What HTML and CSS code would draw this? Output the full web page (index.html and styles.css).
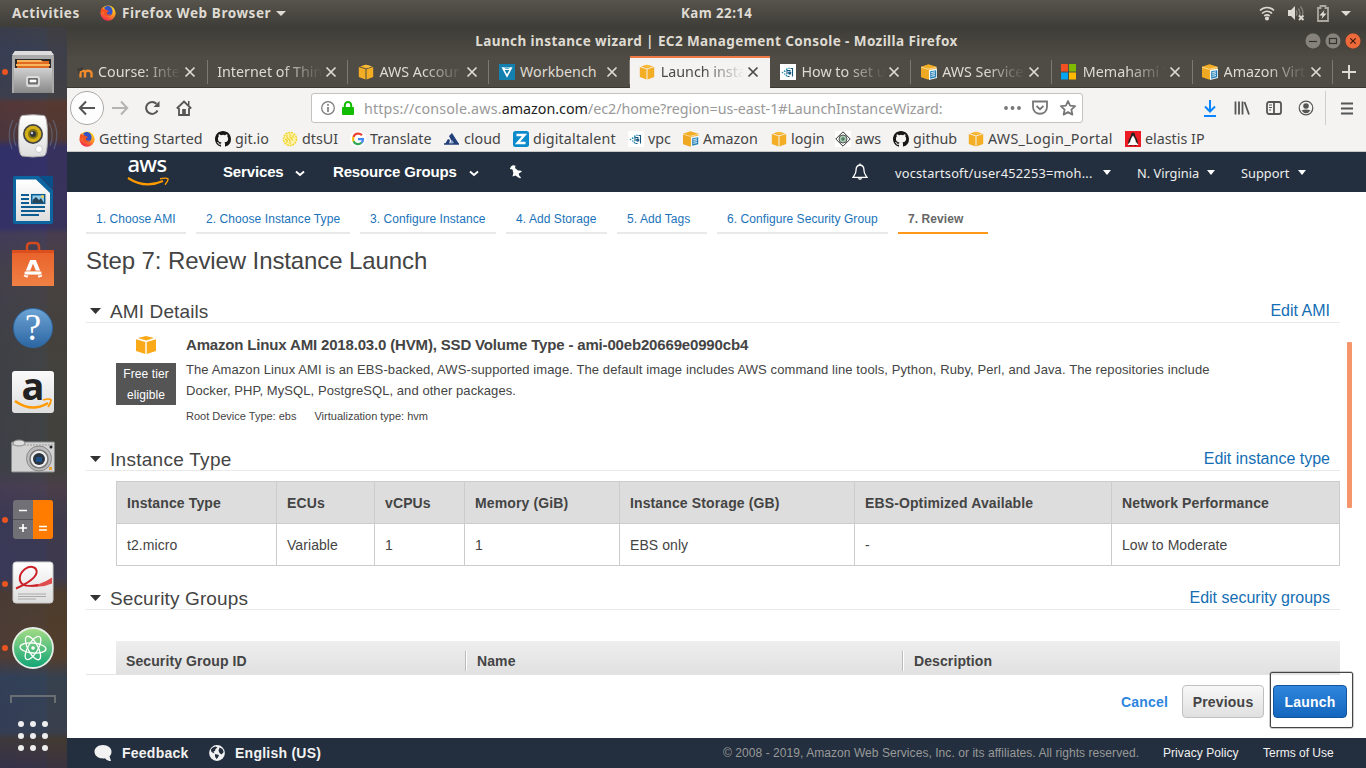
FILE: index.html
```html
<!DOCTYPE html>
<html lang="en">
<head>
<meta charset="utf-8">
<title>Launch instance wizard | EC2 Management Console</title>
<link rel="stylesheet" href="styles.css">
</head>
<body>
<svg class="defs" width="0" height="0">
  <defs>
    <linearGradient id="fxg" x1="0.8" y1="0" x2="0.3" y2="1"><stop offset="0" stop-color="#ffe226"/><stop offset="0.45" stop-color="#ff9a1f"/><stop offset="1" stop-color="#f0214d"/></linearGradient>
    <linearGradient id="metal" x1="0" y1="0" x2="0" y2="1"><stop offset="0" stop-color="#d0d0d0"/><stop offset="1" stop-color="#888"/></linearGradient>
    <linearGradient id="paper" x1="0" y1="0" x2="0" y2="1"><stop offset="0" stop-color="#fff"/><stop offset="1" stop-color="#ddd"/></linearGradient>
    <linearGradient id="bagg" x1="0" y1="0" x2="0" y2="1"><stop offset="0" stop-color="#e8612a"/><stop offset="1" stop-color="#f08044"/></linearGradient>
    <linearGradient id="atomg" x1="0" y1="0" x2="0" y2="1"><stop offset="0" stop-color="#a5dc85"/><stop offset="1" stop-color="#0fa576"/></linearGradient>
    <symbol id="firefox" viewBox="0 0 16 16"><circle cx="8" cy="8.2" r="7.6" fill="url(#fxg)"/><path d="M4.200 2.800C6 .5 9.700.5 11.600 3c1.200 1.600 1.300 4.500.3 6-1.300 2-4.300 2.500-5.900 1C5 8.500 5.300 6.800 6.800 6.200 5.700 5.300 4.800 4.300 4.200 2.800z" fill="#3453c9"/><path d="M.7 6.500C1 4.200 1.700 3 2.300 2.100c.1.8.4 1.400.9 1.900 1.500-.3 2.800.5 3.600 1.300 1 .2 2 .3 1.900.9-.3.900-1.700.8-2 1.700.5 2 2.600 2 3.800 1.200-.5 2.500-4.500 2.800-6 .6C3.400 8.500 3.500 7.500 3.800 6.700 2.500 7 2 8 2 9.300z" fill="#f5531f"/></symbol>
    <symbol id="cube" viewBox="0 0 16 16"><path d="M8 .8 14 2.600 8 4.400 2 2.600zM.8 3l6.700 2.200V15.600L.8 13.100zM15.200 3l-6.700 2.200V15.600l6.700-2.500z" fill="#f3ae25"/><path d="M4 2 8 .8l6 1.800L10 3.700z" fill="#f8bd3d"/></symbol>
    <symbol id="cubedoc" viewBox="0 0 16 16"><path d="M0 2.800 7.500.3 15.500 2.800v10L7.500 15.500 0 13z" fill="#f3ae25"/><path d="M0 3.500 7 5.700V15.500L0 13z" fill="#eea822"/><path d="M0 3.200L7 5.300l8.500-2" fill="none" stroke="#fbe3b0" stroke-width=".8"/><path d="M8 6l8-1.500v9.500L8 16z" fill="#f2f8fb"/><path d="M9.200 7.200l6-1v7l-6 1.500z" fill="#2481b7"/><path d="M10.300 8.500l3.700-.6M10.300 10.300l3.700-.6M10.300 12.300l3.700-.7" stroke="#fff" stroke-width=".9"/></symbol>
    <symbol id="github" viewBox="0 0 16 16"><path fill="#181717" fill-rule="evenodd" d="M8 0C3.580 0 0 3.580 0 8c0 3.540 2.290 6.530 5.470 7.590.4.070.55-.17.55-.38 0-.19-.01-.82-.01-1.490-2.010.37-2.530-.49-2.690-.94-.09-.23-.48-.94-.82-1.130-.28-.15-.68-.52-.01-.53.63-.01 1.080.58 1.230.82.72 1.210 1.870.87 2.330.66.070-.52.280-.87.510-1.070-1.780-.2-3.640-.89-3.640-3.950 0-.87.310-1.590.820-2.150-.08-.2-.36-1.020.080-2.120 0 0 .67-.21 2.200.82a7.600 7.600 0 0 1 4 0c1.530-1.040 2.200-.82 2.200-.82.44 1.100.16 1.920.08 2.120.51.56.82 1.270.82 2.150 0 3.070-1.870 3.750-3.650 3.950.29.25.54.73.54 1.480 0 1.070-.01 1.930-.01 2.200 0 .21.15.46.55.38A8 8 0 0 0 16 8c0-4.420-3.580-8-8-8z"/></symbol>
    <symbol id="dots" viewBox="0 0 16 16"><rect width="16" height="16" fill="#fff"/><g fill="#2e8fb5"><circle cx="2.500" cy="8.500" r=".8"/><circle cx="4.700" cy="7.200" r=".9"/><circle cx="4.800" cy="10" r=".8"/><circle cx="6.800" cy="5.200" r=".9"/><circle cx="9" cy="4.200" r=".8"/><circle cx="6.500" cy="11.500" r=".9"/></g><g fill="none" stroke="#16577d" stroke-width="1.100"><path d="M7 10V6.500H10.500M10.500 4.500H12.500V12.500M7.500 12.500h2"/></g><circle cx="9.700" cy="9" r="1.700" fill="#1d5f88"/></symbol>
    <symbol id="close" viewBox="0 0 12 12"><path d="M1.500 1.500l9 9m0-9l-9 9" stroke="currentColor" stroke-width="1.700"/></symbol>
    <symbol id="chev" viewBox="0 0 10 7"><path d="M1 1.500l4 3.500 4-3.500" stroke="currentColor" fill="none" stroke-width="2"/></symbol>
    <symbol id="tri" viewBox="0 0 10 6" preserveAspectRatio="none"><path d="M0 0h10L5 6z" fill="currentColor"/></symbol>
  </defs>
</svg>
<div class="desktop">
  <header class="topbar">
    <span class="tb-act">Activities</span>
    <svg class="i16 tb-ff"><use href="#firefox"/></svg>
    <span class="tb-app">Firefox Web Browser</span>
    <svg class="tb-tri" width="10" height="5"><use href="#tri"/></svg>
    <span class="tb-clock">Kam 22:14</span>
    <div class="tb-status">
      <svg width="16" height="16" viewBox="0 0 16 16" fill="none" stroke="#dcdad2" stroke-width="1.700"><path d="M1 5.500c4-4 10-4 14 0M3 8.500c3-3 7-3 10 0M5.300 11c1.800-1.500 3.600-1.500 5.400 0"/><circle cx="8" cy="13.500" r="1.200" fill="#dcdad2"/></svg>
      <svg width="18" height="16" viewBox="0 0 18 16"><path d="M1 5h3l4-4v14l-4-4H1z" fill="#dcdad2"/><path d="M9 5.500q2 2.500 0 5M11.300 3.500q3 4 .5 8M13.500 1.500q4 5 1.500 9" fill="none" stroke="#84827a" stroke-width="1.300"/><path d="M12 10.500l4.500 4.500m0-4.500L12 15" stroke="#dcdad2" stroke-width="1.800"/></svg>
      <svg width="12" height="17" viewBox="0 0 12 17"><path d="M1 3h2.500V1h5v2H11v13H1z" fill="none" stroke="#aaa89f" stroke-width="1.800"/><path d="M7.500 5L2.500 10.500H5.500L4.500 14 9.500 8.500H6.500z" fill="#e3e1d8"/></svg>
      <svg width="10" height="5"><use href="#tri"/></svg>
    </div>
  </header>
  <div class="below">
    <aside class="dock">
      <div class="app on"><svg width="42" height="44" viewBox="0 0 42 44"><path d="M3 1h36l3 5v37H0V6z" fill="#aaa"/><path d="M3 1h36l3 4H0z" fill="#ddd"/><path d="M3 9h36v11H3z" fill="#2a2a2a"/><path d="M5 11h32v8H5z" fill="#e06a22"/><path d="M5 10h24l2 2H5zM4 14h34v2H4z" fill="#f7b55c"/><path d="M2 18h38v25H2z" fill="url(#metal)"/><rect x="15" y="27" width="12" height="9" rx="1.500" fill="#aaa" stroke="#ddd" stroke-width="1.800"/><rect x="17" y="29" width="8" height="4" fill="#fff" stroke="#333"/></svg></div>
      <div class="app"><svg width="50" height="44" viewBox="0 0 50 44"><path d="M9 9Q3 20 8 32M5 6Q-2 20 4 35M41 9Q47 20 42 32M45 6Q52 20 46 35" fill="none" stroke="#7286a8" stroke-opacity=".45" stroke-width="1.300"/><path d="M14 1.500q11-1.500 22 0 3.500 1 3.500 20.500T36 42q-11 2-22 0-3.500-1-3.500-20T14 1.500z" fill="url(#paper)" stroke="#aaa"/><circle cx="25" cy="20" r="10" fill="#444"/><circle cx="25" cy="20" r="8.300" fill="#d4b116"/><circle cx="25" cy="20" r="5" fill="#8a7410"/><circle cx="25" cy="20" r="3" fill="#30343c"/><circle cx="24" cy="19" r="1.200" fill="#ccd"/><circle cx="31" cy="35" r="3.500" fill="#fff" stroke="#ccc"/></svg></div>
      <div class="app"><svg width="40" height="48" viewBox="0 0 40 48"><path d="M2 0h24l14 14v32q0 2-2 2H2q-2 0-2-2V2q0-2 2-2z" fill="#0c659f"/><path d="M27 0h12q1 0 1 1v12z" fill="#07508a"/><path d="M3 3.500h20L37 17v28H3z" fill="url(#paper)"/><path d="M8 19h8M8 23h8M8 27h8M8 31h24M8 35h24M8 39h18" stroke="#0c5d92" stroke-width="2"/><rect x="18.700" y="18.700" width="13" height="8.600" fill="#93cdec" stroke="#0c5d92" stroke-width="1.500"/><path d="M19.500 27v-3l3.500-3 3 3 2-2 3 5z" fill="#28465a"/><circle cx="29.500" cy="20.500" r="1.500" fill="#edd14c"/></svg></div>
      <div class="app"><svg width="42" height="46" viewBox="0 0 42 46"><path d="M15 12V6q0-4 4-4h4q4 0 4 4v6" fill="none" stroke="#d14b1e" stroke-width="2.500"/><path d="M0 9h42v36H0z" fill="url(#bagg)"/><path d="M0 9h42v3H0z" fill="#db4e1d"/><path d="M13.500 36l6-15h3l6 15" fill="none" stroke="#fff" stroke-width="4"/><rect x="12" y="30" width="18" height="4" rx="2" fill="#fff" stroke="#e97238" stroke-width=".8"/></svg></div>
      <div class="app"><div class="help">?</div></div>
      <div class="app"><div class="amz"><span>a</span><svg width="38" height="12" viewBox="0 0 38 12"><path d="M1 3q17 12 33 2" fill="none" stroke="#ff9900" stroke-width="2.600"/><path d="M29 2q7-2 8 0 0 3-3 7" fill="none" stroke="#ff9900" stroke-width="1.800"/></svg></div></div>
      <div class="app"><svg width="44" height="34" viewBox="0 0 44 34"><rect x=".5" y="3" width="43" height="30" rx="1" fill="#d2d2d2" stroke="#888"/><path d="M1 6h42" stroke="#999" stroke-dasharray="2 1"/><ellipse cx="8" cy="4" rx="6" ry="3" fill="#ddd" stroke="#888"/><circle cx="28" cy="19.500" r="12.500" fill="#bbb" stroke="#888"/><circle cx="28" cy="20" r="9" fill="#eee" stroke="#777" stroke-width="1.500"/><circle cx="28" cy="20" r="6" fill="#2c3440"/><rect x="25" y="18" width="6" height="5" fill="#1d5088"/><circle cx="40" cy="8" r="1.500" fill="#222"/><rect x="38" y="28" width="3" height="3" fill="#e9a02c"/></svg></div>
      <div class="app on"><svg width="40" height="40" viewBox="0 0 40 40"><rect width="40" height="39" rx="3" fill="#707076"/><path d="M20 0h17q3 0 3 3v33q0 3-3 3H20z" fill="#ff7c00"/><path d="M0 19.500h20" stroke="#505056"/><path d="M6 10.500h8M6 28h8M10 24v8M26 26.500h8M26 30h8" stroke="#fff" stroke-width="1.700"/></svg></div>
      <div class="app on"><svg class="pdf" width="42" height="43" viewBox="0 0 42 43"><rect x="1" y="1" width="40" height="41" rx="3" fill="url(#paper)" stroke="#ccc"/><path d="M14 24.500Q28 25 40 16.500v6Q28 28 14 24.500z" fill="#de4c4c"/><path d="M4 27.500C14 23 23 18 24.500 12 25.500 6 19 4 13 8 7 12.500 6 20 11 23.500 15 26 20 25 26 24" fill="none" stroke="#ca2128" stroke-width="2"/><path d="M6 33h28M6 35.500h28M6 38h18" stroke="#aaa"/></svg></div>
      <div class="app on"><svg width="42" height="42" viewBox="0 0 42 42"><circle cx="21" cy="21" r="20" fill="url(#atomg)" stroke="#e4eee6" stroke-width="1.800"/><g fill="none" stroke="#fff" stroke-width="1.300"><ellipse cx="21" cy="21" rx="13" ry="5" transform="rotate(5 21 21)"/><ellipse cx="21" cy="21" rx="13" ry="5" transform="rotate(62 21 21)"/><ellipse cx="21" cy="21" rx="13" ry="5" transform="rotate(120 21 21)"/></g><circle cx="21" cy="21" r="1.800" fill="#fff"/></svg></div>
      <div class="trash"></div>
      <svg class="grid" width="32" height="32" viewBox="0 0 32 32" fill="#eee"><circle cx="4" cy="4" r="3"/><circle cx="16" cy="4" r="3"/><circle cx="28" cy="4" r="3"/><circle cx="4" cy="16" r="3"/><circle cx="16" cy="16" r="3"/><circle cx="28" cy="16" r="3"/><circle cx="4" cy="28" r="3"/><circle cx="16" cy="28" r="3"/><circle cx="28" cy="28" r="3"/></svg>
    </aside>
    <main class="window">
      <div class="titlebar"><span class="wtitle">Launch instance wizard | EC2 Management Console - Mozilla Firefox</span>
        <div class="wbtns">
          <svg class="i16" viewBox="0 0 16 16"><circle cx="8" cy="8" r="7.900" fill="#85837b" stroke="#33322e" stroke-width=".5"/><path d="M4 8.500h8" stroke="#33322e" stroke-width="1.200"/></svg>
          <svg class="i16" viewBox="0 0 16 16"><circle cx="8" cy="8" r="7.900" fill="#85837b" stroke="#33322e" stroke-width=".5"/><rect x="4.500" y="5.500" width="7" height="5" fill="none" stroke="#33322e" stroke-width="1.200"/></svg>
          <svg class="i16" viewBox="0 0 16 16"><circle cx="8" cy="8" r="7.900" fill="#ee6a3a" stroke="#33322e" stroke-width=".5"/><path d="M5.300 5.300l5.400 5.400m0-5.400l-5.400 5.400" stroke="#3c1c10" stroke-width="1.200"/></svg>
        </div>
      </div>
      <div class="tabs">
        <div class="tab"><svg class="i16" viewBox="0 0 16 16"><path d="M3.500 13.500V9q0-2.200 2.200-2.200T8 9v4.500M8 9q0-2.200 2.900-2.200T14.500 9v4.500" fill="none" stroke="#f08a2c" stroke-width="2.400"/><path d="M0 5.500l6-1.700-1 2.500L2 6.800v3" fill="#444" stroke="#333" stroke-width=".8"/></svg><span class="tt">Course: Inte</span><svg class="x"><use href="#close"/></svg></div>
        <div class="tab"><span class="tt">Internet of Thin</span><svg class="x"><use href="#close"/></svg></div>
        <div class="tab"><svg class="i16"><use href="#cube"/></svg><span class="tt">AWS Accour</span><svg class="x"><use href="#close"/></svg></div>
        <div class="tab"><svg class="i16" viewBox="0 0 16 16"><rect width="16" height="16" fill="#1480b0"/><path d="M2.500 3.300h11L8 13.800z" fill="#fff"/><path d="M5.600 6h4.800L8 10.300z" fill="#1480b0"/><path d="M5 3.300h6L9.500 5h-3z" fill="#63b4d4"/></svg><span class="tt nofade">Workbench</span><svg class="x"><use href="#close"/></svg></div>
        <div class="tab active"><svg class="i16"><use href="#cube"/></svg><span class="tt">Launch insta</span><svg class="x"><use href="#close"/></svg></div>
        <div class="tab"><svg class="i16"><use href="#dots"/></svg><span class="tt">How to set u</span><svg class="x"><use href="#close"/></svg></div>
        <div class="tab"><svg class="i16"><use href="#cubedoc"/></svg><span class="tt">AWS Service</span><svg class="x"><use href="#close"/></svg></div>
        <div class="tab"><svg class="i16" viewBox="0 0 16 16"><path d="M0 0h7v7.500H0z" fill="#f25022"/><path d="M8 0H15v7.500H8z" fill="#7fba00"/><path d="M0 8.500h7V15.500H0z" fill="#00a4ef"/><path d="M8 8.500H15V15.500H8z" fill="#ffb900"/></svg><span class="tt">Memahami T</span><svg class="x"><use href="#close"/></svg></div>
        <div class="tab"><svg class="i16"><use href="#cubedoc"/></svg><span class="tt">Amazon Virt</span><svg class="x"><use href="#close"/></svg></div>
        <svg class="plus" width="16" height="16" viewBox="0 0 16 16"><path d="M8 1v14M1 8h14" stroke="#dfdbd2" stroke-width="2"/></svg>
      </div>
      <div class="navbar">
        <div class="back"><svg width="18" height="16" viewBox="0 0 18 16"><path d="M17 8H2M8 1.500L1.800 8 8 14.500" fill="none" stroke="#555" stroke-width="2"/></svg></div>
        <svg class="fwd" width="17" height="16" viewBox="0 0 17 16"><path d="M0 8h15M9 1.500L15.200 8 9 14.500" fill="none" stroke="#b5b4b2" stroke-width="2"/></svg>
        <svg class="reload i16" viewBox="0 0 16 16"><path d="M13.500 10.500A6 6 0 1 1 12.500 3.800" fill="none" stroke="#555" stroke-width="2"/><path d="M15.500 1v6h-6z" fill="#555"/></svg>
        <svg class="home i16" viewBox="0 0 16 16"><path d="M.8 8.500L8 1.500l7.200 7M3 8v7h10V8" fill="none" stroke="#555" stroke-width="1.800"/><rect x="6.200" y="9" width="3.600" height="6" fill="#555"/><path d="M12 1h1.500v4H12z" fill="#555"/></svg>
        <div class="url">
          <svg class="info" width="14" height="14" viewBox="0 0 14 14"><circle cx="7" cy="7" r="6.300" fill="none" stroke="#777" stroke-width="1.200"/><path d="M7 6v5M7 3v1.700" stroke="#777" stroke-width="1.600"/></svg>
          <svg class="lock" width="12" height="14" viewBox="0 0 12 14"><path d="M2.800 7V4.200a3.200 3.200 0 0 1 6.400 0V7" fill="none" stroke="#12bc00" stroke-width="2"/><rect y="6" width="12" height="8" rx="1" fill="#12bc00"/></svg>
          <span class="addr"><i>https://console.aws.</i><b>amazon.com</b>/ec2/home?region=us-east-1#LaunchInstanceWizard:</span>
          <svg class="u3" width="17" height="4" viewBox="0 0 17 4" fill="#777"><circle cx="2" cy="2" r="1.900"/><circle cx="8.500" cy="2" r="1.900"/><circle cx="15" cy="2" r="1.900"/></svg>
          <svg class="i16 upk" viewBox="0 0 16 16" fill="none" stroke="#777" stroke-width="1.800"><path d="M1 1.500h14V7c0 9-14 9-14 0zM4.500 6L8 9.200 11.500 6"/></svg>
          <svg class="i16" viewBox="0 0 16 16" fill="none" stroke="#777" stroke-width="1.800" stroke-linejoin="round"><path d="M8 1l2.100 4.600 5 .6-3.700 3.400 1 5L8 12.100l-4.400 2.500 1-5L.9 6.200l5-.6z"/></svg>
        </div>
        <div class="tools">
          <svg width="12" height="17" viewBox="0 0 12 17" fill="none" stroke="#0a84ff" stroke-width="2"><path d="M6 0v12M1 6.500l5 5 5-5M0 16h12"/></svg>
          <svg class="i16" viewBox="0 0 16 16" fill="none" stroke="#555" stroke-width="1.800"><path d="M1.500 1.500v13M5 1.500v13M8.500 1.500v13M10.500 2l4.500 12.500"/></svg>
          <svg class="i16" viewBox="0 0 16 16" fill="none" stroke="#555" stroke-width="1.800"><rect x="1" y="2" width="14" height="12" rx="2"/><path d="M8 2v12"/><path d="M3 5h3M3 7.500h3M3 10h2" stroke-width="1"/></svg>
          <svg class="i16" viewBox="0 0 16 16"><circle cx="8" cy="8" r="6.800" fill="none" stroke="#555" stroke-width="1.200"/><circle cx="8" cy="6" r="2.800" fill="#555"/><path d="M3.500 10.500Q8 8.500 12.500 10.500 8 16 3.500 10.500z" fill="#555"/></svg>
          <span class="vsep"></span>
          <svg width="12" height="13" viewBox="0 0 12 13" stroke="#555" stroke-width="2"><path d="M0 1.500h12M0 6.500h12M0 11.500h12"/></svg>
        </div>
      </div>
      <div class="bookmarks">
        <span class="bm w1"><svg class="i16"><use href="#firefox"/></svg>Getting Started</span>
        <span class="bm w2"><svg class="i16"><use href="#github"/></svg>git.io</span>
        <span class="bm w3"><svg class="i16" viewBox="0 0 16 16"><circle cx="8" cy="8" r="6.500" fill="#fff3ac" stroke="#f2d52c" stroke-width="1.500" stroke-dasharray="2 .8"/><path d="M5 4v3l3 2v4M8 3v3l3 3M11 4v3M5 9v3M3 8l3 2" fill="none" stroke="#efd02a" stroke-width="1.100"/></svg>dtsUI</span>
        <span class="bm w4"><svg class="i16" viewBox="0 0 16 16"><circle cx="8" cy="8" r="8" fill="#fff"/><g fill="none" stroke-width="2.200"><path d="M12 4.300A5 5 0 0 0 3.500 6" stroke="#ea4335"/><path d="M3.500 6a5 5 0 0 0 0 4.200" stroke="#fbbc05"/><path d="M3.500 10.200a5 5 0 0 0 8 1.600" stroke="#34a853"/><path d="M11.500 11.800A5 5 0 0 0 13 8.200H8" stroke="#4285f4"/></g></svg>Translate</span>
        <span class="bm w5"><svg class="i16" viewBox="0 0 16 16"><path d="M1 13l3-5 2 1L5 13zM5 5l3-3 7 11H9.500L7 9z" fill="#223f79"/><path d="M0 13h15" stroke="#223f79" stroke-width="1.500"/><path d="M6 12l2-3 2 3" fill="#8fa6cd"/></svg>cloud</span>
        <span class="bm w6"><svg class="i16" viewBox="0 0 16 16"><rect width="16" height="16" rx="2.500" fill="#0b8bcb"/><path d="M3.500 4h8L4.500 12H12.500" fill="none" stroke="#fff" stroke-width="2.400"/></svg>digitaltalent</span>
        <span class="bm w7"><svg class="i16"><use href="#dots"/></svg>vpc</span>
        <span class="bm w8"><svg class="i16"><use href="#cubedoc"/></svg>Amazon</span>
        <span class="bm w9"><svg class="i16"><use href="#cube"/></svg>login</span>
        <span class="bm w10"><svg class="i16" viewBox="0 0 16 16"><rect width="16" height="16" fill="#fff"/><path d="M8 .8L15.200 8 8 15.200.8 8z" fill="none" stroke="#333" stroke-width="1"/><circle cx="8" cy="8" r="4" fill="#a9c9b4" stroke="#444" stroke-width=".9"/><path d="M6 8h4M8 6v4" stroke="#376b48"/></svg>aws</span>
        <span class="bm w11"><svg class="i16"><use href="#github"/></svg>github</span>
        <span class="bm w12"><svg class="i16"><use href="#cube"/></svg>AWS_Login_Portal</span>
        <span class="bm w13"><svg class="i16" viewBox="0 0 16 16"><rect width="16" height="16" fill="#ed1c24"/><path d="M8 1.500q2 0 2 3 3 4 3 9-2 2-5 .5-3 1.500-5-.5 0-5 3-9 0-3 2-3z" fill="#222"/><path d="M8 4.500Q12 10 10.500 14h-5Q4 10 8 4.500z" fill="#fff"/><path d="M2.500 14l2.500-3 1.500 3zM13.500 14L11 11l-1.500 3z" fill="#fff"/></svg>elastis IP</span>
      </div>
      <div class="page">
        <nav class="aws">
          <div class="logo"><span>aws</span><svg width="42" height="10" viewBox="0 0 42 10"><path d="M1 1Q18 12 36 4" fill="none" stroke="#ff9900" stroke-width="2.200"/><path d="M33 1.700q7-1.300 8 0 .3 2-3 6" fill="none" stroke="#ff9900" stroke-width="1.400"/></svg></div>
          <span class="m m1">Services</span><svg class="c1" width="10" height="7"><use href="#chev"/></svg>
          <span class="m m2">Resource Groups</span><svg class="c2" width="10" height="7"><use href="#chev"/></svg>
          <svg class="pin" width="14" height="14" viewBox="0 0 14 14" fill="#fff"><path d="M2 1.500Q4-.5 6.500.8L6 3l3 2.500q3-.5 4 1L9.800 8.500 10 13 6.500 10.500 3.500 11.500 4.300 8 3.500 4.500.8 4z"/><path d="M8.500 9.500L11.500 13" stroke="#fff" stroke-width="1.300"/></svg>
          <svg class="bell" width="16" height="18" viewBox="0 0 16 18"><path d="M8 2C4.500 2.200 4 5 4 7.500 4 11 2.500 12 1 14.300h14C13.500 12 12 11 12 7.500 12 5 11.500 2.200 8 2zM8 .5V2" fill="none" stroke="#fff" stroke-width="1.300"/><path d="M5.500 15.200h5Q8 18.500 5.500 15.200z" fill="#fff"/></svg>
          <span class="r r1">vocstartsoft/user452253=moh...</span><svg class="t1" width="8" height="5"><use href="#tri"/></svg>
          <span class="r r2">N. Virginia</span><svg class="t2" width="8" height="5"><use href="#tri"/></svg>
          <span class="r r3">Support</span><svg class="t2" width="8" height="5"><use href="#tri"/></svg>
        </nav>
        <div class="content">
          <div class="steps"><a class="s1">1. Choose AMI</a><a class="s2">2. Choose Instance Type</a><a class="s3">3. Configure Instance</a><a class="s4">4. Add Storage</a><a class="s5">5. Add Tags</a><a class="s6">6. Configure Security Group</a><a class="s7 cur">7. Review</a></div>
          <h1>Step 7: Review Instance Launch</h1>
          <div class="scroll">
            <div class="sec"><svg width="11" height="6"><use href="#tri"/></svg><h2>AMI Details</h2><a>Edit AMI</a></div>
            <div class="ami">
              <div class="side"><svg width="22" height="20" viewBox="0 0 22 20"><path d="M11 1l8 2-8 2.500L3 3zM1 4.200L10.300 7v12L1 16zM21 4.200L11.700 7v12L21 16z" fill="#faa918"/></svg><div class="free">Free tier<br>eligible</div></div>
              <div class="info2"><div class="name">Amazon Linux AMI 2018.03.0 (HVM), SSD Volume Type - ami-00eb20669e0990cb4</div>
                <div class="desc"><span class="d1">The Amazon Linux AMI is an EBS-backed, AWS-supported image. The default image includes AWS command line tools, Python, Ruby, Perl, and Java. The repositories include</span><br><span class="d2">Docker, PHP, MySQL, PostgreSQL, and other packages.</span></div>
                <div class="meta"><span>Root Device Type: ebs</span><span>Virtualization type: hvm</span></div></div>
            </div>
            <div class="sec"><svg width="11" height="6"><use href="#tri"/></svg><h2 class="wide">Instance Type</h2><a>Edit instance type</a></div>
            <div class="itable">
              <b>Instance Type</b><b>ECUs</b><b>vCPUs</b><b>Memory (GiB)</b><b>Instance Storage (GB)</b><b>EBS-Optimized Available</b><b>Network Performance</b>
              <span>t2.micro</span><span>Variable</span><span>1</span><span>1</span><span>EBS only</span><span>-</span><span>Low to Moderate</span>
            </div>
            <div class="sec sec3"><svg width="11" height="6"><use href="#tri"/></svg><h2>Security Groups</h2><a>Edit security groups</a></div>
            <div class="sg"><b>Security Group ID</b><b>Name</b><b>Description</b></div>
            <div class="thumb"></div>
          </div>
          <div class="actions"><a>Cancel</a><button class="prev">Previous</button><div class="focus"><button class="launch">Launch</button></div></div>
        </div>
        <footer class="foot">
          <svg width="18" height="16" viewBox="0 0 18 16"><path d="M9 0c5 0 8.500 3 8.500 6.700 0 2-.8 3.500-2 4.500L17 16q-4 0-6-2.800Q9.500 13.500 8 13.300C4 13 .5 10.500.5 6.700S4 0 9 0z" fill="#f2f2f2"/></svg>
          <span class="f f1">Feedback</span>
          <svg class="i16" viewBox="0 0 16 16"><circle cx="8" cy="8" r="7.900" fill="#f2f2f2"/><path d="M1.800 4.500Q3.500 2 6.500 1.500L8.500 2.500 6.500 4 6 6 4.500 6.500 5.500 8.500 2.500 7zM10.500 2.500l3 1.500 1.200 3-2.200 2.500L10.500 8 9.500 5.500zM6 9l4 1-1 2.500L7.500 14 6 11.500z" fill="#232f3e"/></svg>
          <span class="f f2">English (US)</span>
          <span class="copy">© 2008 - 2019, Amazon Web Services, Inc. or its affiliates. All rights reserved.</span>
          <span class="pp">Privacy Policy</span><span class="tou">Terms of Use</span>
        </footer>
      </div>
    </main>
  </div>
</div>
</body>
</html>
```
FILE: styles.css
```css
*{box-sizing:border-box}
body{margin:0;width:1366px;height:768px;overflow:hidden;font-family:"Liberation Sans",Arial,sans-serif;color:#444}
svg{display:block;flex:none}
.defs{position:absolute}
.i16{width:16px;height:16px}
.desktop{height:768px;display:flex;flex-direction:column}
.topbar{height:27px;flex:none;background:linear-gradient(#57544c,#3e3d38);display:flex;align-items:center;font:bold 13.500px "Noto Sans",sans-serif;color:#dfdbd2;position:relative;white-space:nowrap;padding:0 0 1px 12px}
.tb-act{width:88px;letter-spacing:.5px}
.tb-app{margin-left:6px;width:149px;letter-spacing:.58px}
.tb-tri{margin-left:5px}
.tb-clock{position:absolute;left:681px;font-size:13.300px;letter-spacing:.45px}
.tb-status{margin-left:auto;display:flex;align-items:center;gap:12px;padding-right:15px}
.tb-status svg:nth-child(1),.tb-status svg:nth-child(2){transform:translateX(-1px)}
.tb-status svg:nth-child(2){margin-right:-1px}
.below{display:flex;height:741px}
.dock{width:67px;flex:none;padding-top:13px;background:linear-gradient(90deg,rgba(30,28,100,.12) 0,rgba(30,28,100,.05) 46px,rgba(70,45,30,.15) 48px),linear-gradient(#3e4147 0,#3b4252 25px,#40434a 70px,#5a3b33 76px,#503a38 112px,#343268 120px,#363466 200px,#474057 207px,#484446 245px,#434542 330px,#414542 440px,#4b4150 460px,#3d3c53 495px,#3d3c56 550px,#4e3f2e 566px,#554130 630px,#344456 650px,#374253 705px,#423c36 712px,#383446 741px)}
.app{height:64px;display:flex;align-items:center;justify-content:center;position:relative;padding-right:1px}
.pdf{margin-top:-3px}
.on::before{content:"";position:absolute;left:2px;top:29px;width:6px;height:6px;border-radius:50%;background:#e95420}
.help{width:40px;height:40px;border-radius:50%;background:linear-gradient(#6da3d4,#2c66a2);border:1px solid #2d6ca8;color:#fff;font:37px/38px "Liberation Serif",serif;text-align:center}
.amz{width:42px;height:42px;border-radius:3px;background:linear-gradient(#fafafa,#dedede);display:flex;flex-direction:column;align-items:center}
.amz span{font:bold 38px/28px "Open Sans",sans-serif;color:#222;height:27px}
.trash{height:8px;width:46px;margin:15px 0 0 10px;border:2px solid #777a7c;border-bottom:0;opacity:.8}
.grid{margin:17px 0 0 17px}
.window{width:1299px;display:flex;flex-direction:column}
.titlebar{height:29px;background:linear-gradient(#3e3d38,#4d4a43);position:relative;display:flex;align-items:center;justify-content:center;color:#dfdbd2;padding-bottom:1px}
.wtitle{font:bold 13.500px "Noto Sans",sans-serif;letter-spacing:.41px;white-space:nowrap}
.wbtns{position:absolute;right:5px;top:6px;display:flex;gap:4px}
.tabs{height:32px;background:#4f4c45;border-bottom:1px solid #393832;display:flex}
.tab{width:140.700px;height:32px;display:flex;align-items:center;padding:0 11.500px 0 9.500px;color:#dfdbd2;font:14.300px "Noto Sans",sans-serif;position:relative;flex:none}
.tab::after{content:"";position:absolute;right:0;top:4px;height:24px;width:1px;background:#7c7972}
.tt{flex:1;width:0;margin:0 3px 1px 5.500px;white-space:nowrap;-webkit-mask-image:linear-gradient(90deg,#000 calc(100% - 40px),transparent)}
.tab:nth-child(2) .tt{margin-left:0}
.tab .nofade{-webkit-mask-image:none}
.x{width:12px;height:12px}
.active{background:#f4f3f2;color:#4a4a4a;box-shadow:inset 0 2px #f07746}
.active::after{display:none}
.plus{margin:8px 0 0 8px}
.navbar{height:40px;background:#f4f3f2;display:flex;align-items:center;padding-left:3px}
.back{width:34px;height:34px;border-radius:50%;border:1px solid #aaa9a7;background:#fdfdfd;display:flex;align-items:center;justify-content:center}
.fwd{margin-left:8px}.reload{margin-left:15px}.home{margin-left:16px}
.url{margin-left:119px;width:772px;height:30px;border:1px solid #c4c2c0;border-radius:3px;background:#fff;display:flex;align-items:center;padding-left:9px;font:14.300px "Noto Sans",sans-serif;color:#999;white-space:nowrap}
.lock{margin-left:7px}
.addr{margin-left:10px;width:640px;letter-spacing:-.06px}
.addr i{font-style:normal;letter-spacing:.15px}
.addr b{font-weight:400;color:#222;letter-spacing:0}
.upk{margin:0 12px 0 11px}
.tools{display:flex;align-items:center;margin-left:121px}
.tools svg:nth-child(2){margin-left:18px}
.tools svg:nth-child(3){margin-left:16px}
.tools svg:nth-child(4){margin-left:16px}
.vsep{width:1px;height:34px;background:#d0cecc;margin:0 15px 0 11px}
.bookmarks{height:24px;background:#f4f3f2;border-bottom:1px solid #c9c7c5;display:flex;padding-left:12px;font:14.300px "Noto Sans",sans-serif;color:#454545;white-space:nowrap}
.bm{display:flex;align-items:center;gap:4px;flex:none;height:21px}
.w1{width:136px;letter-spacing:.06px}.w2{width:67px}.w3{width:68px}.w4{width:94px}.w5{width:69px}.w6{width:115px;letter-spacing:.15px}.w7{width:55px}.w8{width:88px}.w9{width:64px}.w10{width:58px}.w11{width:75px}.w12{width:157px;letter-spacing:.3px}
.page{height:616px;display:flex;flex-direction:column;background:#fff}
.aws{height:40px;flex:none;background:#232f3e;display:flex;align-items:center;color:#fff;white-space:nowrap;padding-left:60px;font-weight:bold}
.logo{width:42px;height:34px;margin-right:54px}
.logo span{display:block;font:500 22px/17px "Noto Sans",sans-serif;height:22px;text-align:center;letter-spacing:-.6px;padding-right:2px}
.m{font-size:15px;letter-spacing:-.15px;padding-bottom:1px}
.m1{width:72px}.c1{margin-right:28px}.m2{width:136px}
.c2{margin-right:30px;margin-top:2px}.c1{margin-top:2px}
.bell{margin-left:329px}
.r{font:12.800px "Noto Sans",sans-serif;color:#eee;padding-top:2px}
.r1{margin-left:27px;width:208px;letter-spacing:.2px}.r2{width:70px}.r3{width:57px}
.t1{margin-right:26px}.t2{margin-right:26px}
.content{height:546px;flex:none;padding:14px 0 0 19px;display:flex;flex-direction:column}
.steps{display:flex;gap:10px;height:28px}
.steps a{font-size:12px;line-height:26px;letter-spacing:.07px;color:#1a73ba;border-bottom:2px solid #e9e9e9;padding-left:10px;white-space:nowrap}
.s1{width:100px}.s2{width:154px}.s3{width:136px}.s4{width:101px}.s5{width:90px}.s6{width:171px}.s7{width:90px}
.steps .cur{color:#666;font-weight:bold;border-color:#ff9818}
h1{font-size:24px;font-weight:400;line-height:28px;letter-spacing:-.1px;margin:13px 0 0;color:#444}
.scroll{margin-top:24px;height:376px;width:1280px;position:relative;overflow:hidden}
.sec{width:1254px;height:24px;border-bottom:1px solid #e9e9e9;display:flex;align-items:flex-start;padding:0 10px 0 4px}
.sec svg{margin-top:9px;color:#333}
.sec h2{font-size:19px;font-weight:400;line-height:25px;margin:0 auto 0 9px;letter-spacing:.12px}
.sec .wide{letter-spacing:.28px}
.sec a{font-size:16px;line-height:23px;color:#146eb4}
.ami{height:124px;display:flex;padding:12px 0 0 30px}
.side{width:60px;margin-right:10px}
.side svg{margin:0 auto 8px 19px}
.free{height:42px;background:#555;color:#fff;font-size:12px;line-height:21px;letter-spacing:.1px;text-align:center;padding-top:1px}
.name{font-size:15px;font-weight:bold;line-height:20px;letter-spacing:-.165px;white-space:nowrap}
.desc{font-size:13px;line-height:21px;margin-top:4px;white-space:nowrap;letter-spacing:.1px}
.d2{letter-spacing:.07px}
.meta{font-size:11px;line-height:16px;margin-top:7px;display:flex;gap:18px}
.itable{margin:10px 0 0 30px;width:1224px;display:grid;grid-template-columns:161px 98px 90px 155px 235px 257px 228px;grid-template-rows:42px 42px;border-top:1px solid #ccc;height:85px}
.itable>*{border-right:1px solid #ccc;border-bottom:1px solid #ccc;padding-left:10px;font-size:14px;line-height:42px;white-space:nowrap;letter-spacing:.07px}
.itable>:nth-child(7n+1){border-left:1px solid #ccc}
.itable b{background:#ddd;letter-spacing:.12px}
.sec3{margin-top:20px}
.sg{margin:31px 0 0 30px;width:1224px;height:40px;background:linear-gradient(#eee,#dedede);display:grid;grid-template-columns:349px 437px 1fr;font-size:14px;line-height:21px;padding-top:10px}
.sg b{padding-left:10px;height:20px;letter-spacing:.1px}
.sg b+b{border-left:1px solid #bbb;box-shadow:inset 1px 0 #fff;padding-left:11px}
.thumb{position:absolute;left:1261px;top:43px;width:5px;height:166px;background:#f6946c;border-radius:1px}
.actions{width:1267px;height:63px;display:flex;align-items:flex-start;justify-content:flex-end;position:relative}
.actions::before{content:"";position:absolute;left:0;top:-1px;width:1254px;height:1px;background:#e4e4e4}
.actions a{font-weight:bold;font-size:14px;color:#2e86de;margin:19px 14px 0 0;letter-spacing:.2px}
button{font:bold 14px "Liberation Sans",sans-serif;height:33px;border-radius:4px;padding:0;letter-spacing:.2px}
.prev{width:82px;border:1px solid #c0c0c0;background:linear-gradient(#f8f8f8,#e0e0e0);color:#444;margin:10px 6px 0 0}
.focus{width:83px;height:56px;border:1.500px solid #444;box-shadow:0 0 0 .500px #999;border-radius:2px;padding:12px 0 0 2px;margin-top:-3px;position:relative}
.launch{display:block;width:74px;border:1px solid #11549a;background:linear-gradient(#2f86dc,#1366be);color:#fff}
.foot{height:30px;background:#232f3e;color:#f2f2f2;display:flex;align-items:center;padding-left:27px;white-space:nowrap;font-size:12px}
.f{font-size:14px;font-weight:bold;letter-spacing:.25px}
.f1{margin-left:10px;width:87px}.f2{margin-left:10px;width:488px}
.copy{color:#999;width:440px;letter-spacing:.06px}.pp{width:100px;letter-spacing:.06px}
```
